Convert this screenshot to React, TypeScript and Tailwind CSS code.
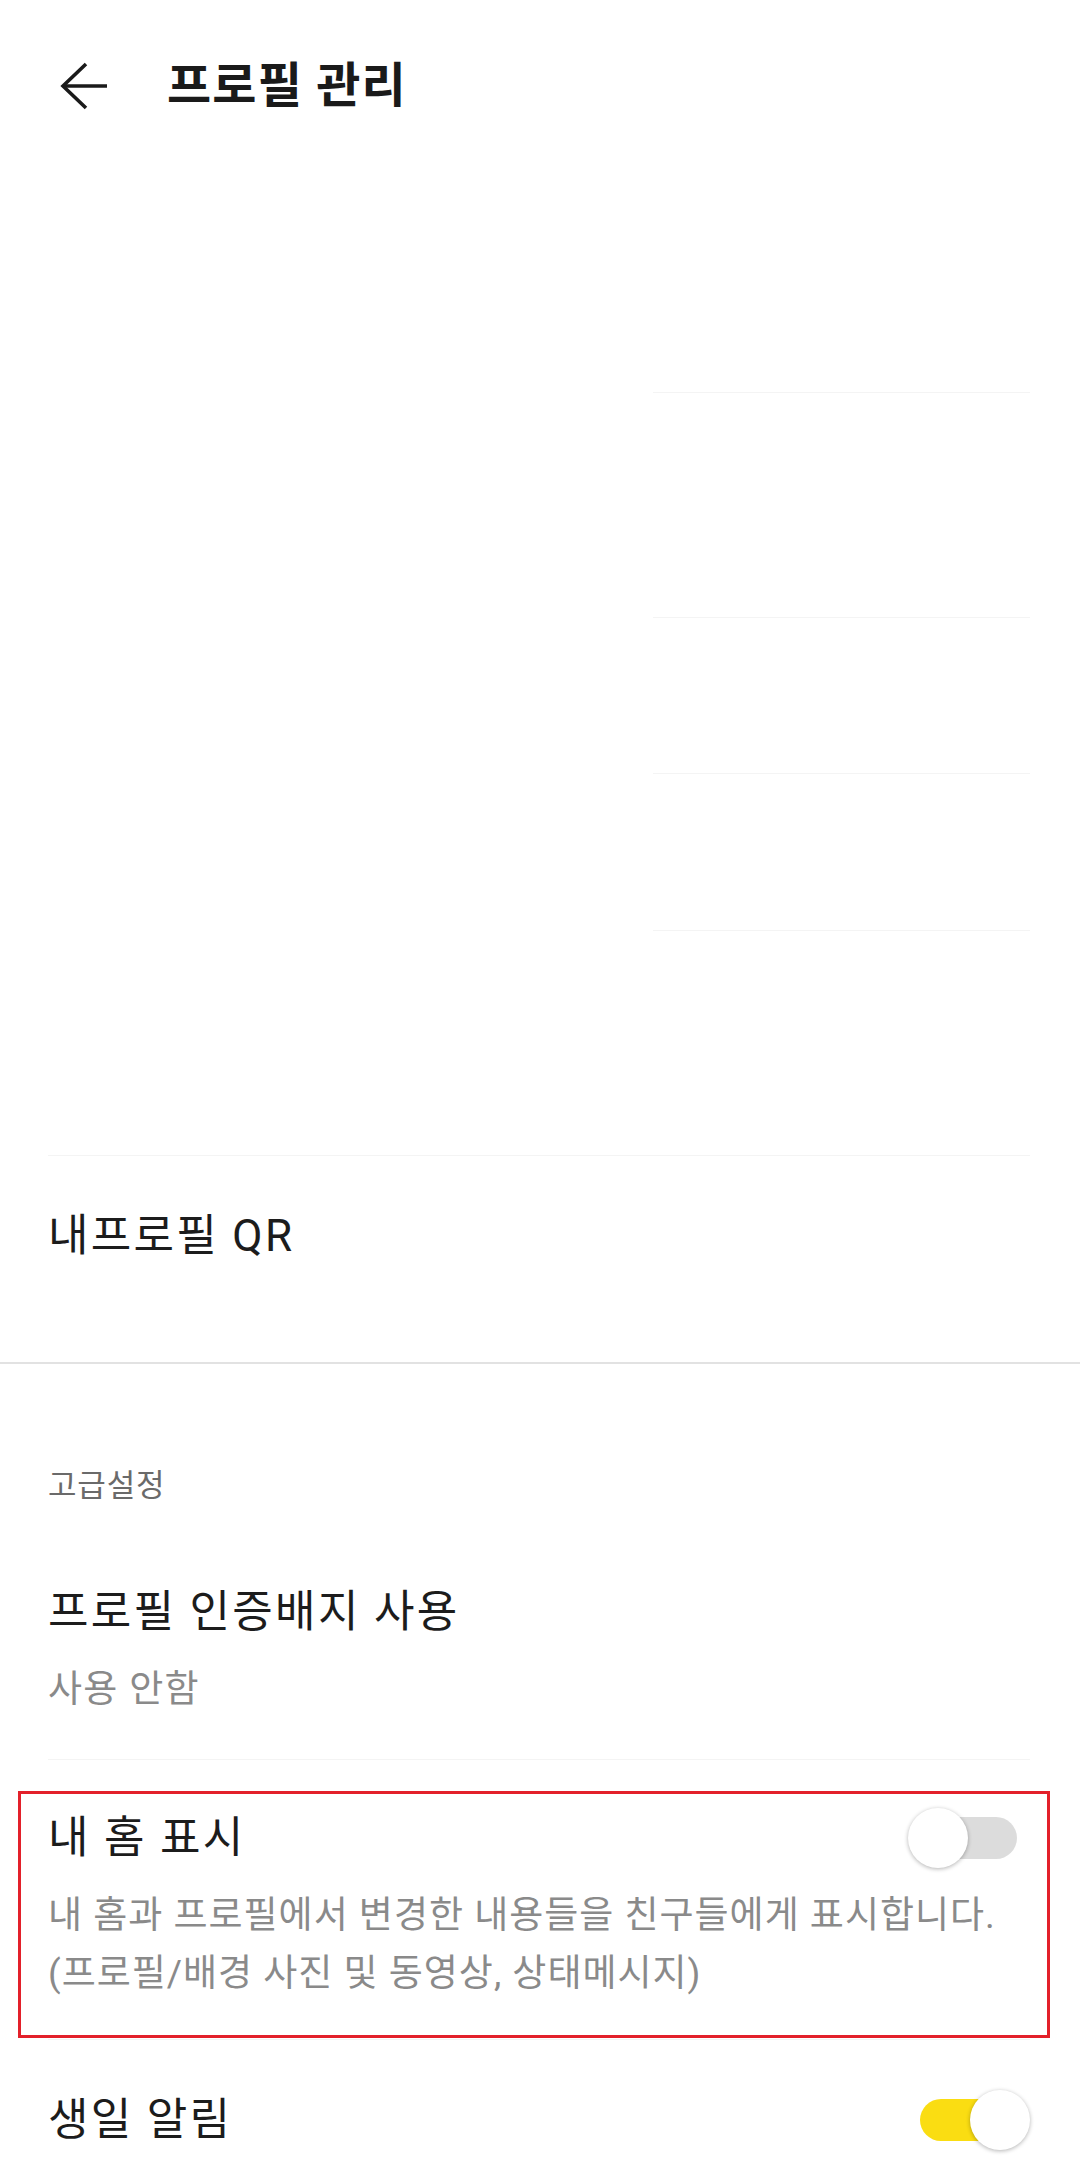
import { useState } from 'react';

const font = { fontFamily: 'Roboto, "Noto Sans CJK KR", "Noto Sans", sans-serif' };

function Toggle({ on, onChange }: { on: boolean; onChange: () => void }) {
    return (
        <button onClick={onChange} className="relative w-[122px] h-[60px] shrink-0">
            <span className={`absolute left-[12px] top-[9px] w-[97px] h-[42px] rounded-full ${on ? 'bg-[#fadd12]' : 'bg-[#dcdcdc]'}`} />
            <span
                className={`absolute top-0 w-[60px] h-[60px] rounded-full bg-white shadow-[0_1px_4px_rgba(0,0,0,0.3)] ${on ? 'left-[62px]' : 'left-0'}`}
            />
        </button>
    );
}

export default function App() {
    const [showHome, setShowHome] = useState(false);
    const [birthday, setBirthday] = useState(true);

    return (
        <div className="w-[1080px] h-[2168px] bg-white overflow-hidden relative" style={font}>
            {/* Header */}
            <div className="h-[172px] flex items-center">
                <button className="ml-[60px] w-[48px] h-[48px] text-[#1a1a1a]">
                    <svg viewBox="0 0 48 48" width="48" height="48" fill="none" stroke="currentColor" strokeWidth="3.6">
                        <path d="M47 24H3" />
                        <path d="M26 2L3 24L26 46" />
                    </svg>
                </button>
                <h1 className="ml-[59px] text-[48px] font-bold tracking-[1.2px] text-[#1a1a1a] leading-none">프로필 관리</h1>
            </div>

            {/* empty profile rows */}
            <div className="h-[221px] border-b border-[#f4f4f4] ml-[653px] mr-[50px]" />
            <div className="h-[225px] border-b border-[#f4f4f4] ml-[653px] mr-[50px]" />
            <div className="h-[156px] border-b border-[#f4f4f4] ml-[653px] mr-[50px]" />
            <div className="h-[157px] border-b border-[#f4f4f4] ml-[653px] mr-[50px]" />
            <div className="h-[225px] border-b border-[#f4f4f4] ml-[48px] mr-[50px]" />

            {/* QR */}
            <div className="h-[160px] flex items-center px-[48px]">
                <span className="text-[44px] leading-[50px] tracking-[2.3px] text-[#1c1c1c]">내프로필 QR</span>
            </div>
            <div className="h-[46px]" />
            <div className="h-[2px] bg-[#e2e2e2]" />

            {/* Advanced */}
            <div className="pt-[102px] px-[48px]">
                <p className="text-[31px] leading-[40px] tracking-[0.8px] text-[#6a6a6a]">고급설정</p>
            </div>

            <div className="ml-[48px] mr-[50px] pt-[81px] pb-[47px] border-b border-[#f4f4f4]">
                <p className="text-[44px] leading-[50px] tracking-[2.3px] text-[#1c1c1c]">프로필 인증배지 사용</p>
                <p className="mt-[31px] text-[37px] leading-[44px] tracking-[1.3px] text-[#8a8a8a]">사용 안함</p>
            </div>

            <div className="ml-[48px] mr-[50px] pt-[53px] pb-[36px] border-b border-[#f4f4f4]">
                <div className="flex items-center justify-between h-[50px]">
                    <p className="text-[44px] leading-[50px] tracking-[2.3px] text-[#1c1c1c]">내 홈 표시</p>
                    <Toggle on={showHome} onChange={() => setShowHome(v => !v)} />
                </div>
                <p className="mt-[24px] text-[37px] leading-[58px] tracking-[1px] text-[#8a8a8a] whitespace-nowrap">
                    내 홈과 프로필에서 변경한 내용들을 친구들에게 표시합니다.
                    <br />
                    (프로필/배경 사진 및 동영상, 상태메시지)
                </p>
            </div>

            <div className="ml-[48px] mr-[50px] pt-[50px] flex items-center justify-between">
                <p className="text-[44px] leading-[50px] tracking-[2.3px] text-[#1c1c1c]">생일 알림</p>
                <Toggle on={birthday} onChange={() => setBirthday(v => !v)} />
            </div>

            {/* highlight box */}
            <div className="absolute left-[18px] top-[1791px] w-[1032px] h-[247px] border-[3px] border-[#e3202a] pointer-events-none" />
        </div>
    );
}
